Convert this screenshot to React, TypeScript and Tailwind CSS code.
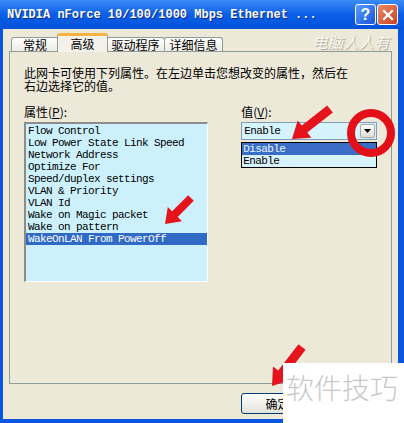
import React from "react";

const props = [
  "Flow Control",
  "Low Power State Link Speed",
  "Network Address",
  "Optimize For",
  "Speed/duplex settings",
  "VLAN & Priority",
  "VLAN Id",
  "Wake on Magic packet",
  "Wake on pattern",
  "WakeOnLAN From PowerOff",
];

const mono = "font-['Liberation_Mono','DejaVu_Sans_Mono',monospace]";
const cjk = "font-['Noto_Sans_CJK_SC','Noto_Sans',sans-serif]";

// arrow polygon from tail (x1,y1) to tip (x2,y2)
function arrowPts(x1: number, y1: number, x2: number, y2: number, shaft = 4, head = 11, headLen = 16) {
  const dx = x2 - x1;
  const dy = y2 - y1;
  const len = Math.hypot(dx, dy);
  const ux = dx / len;
  const uy = dy / len;
  const nx = -uy;
  const ny = ux;
  const bx = x2 - ux * headLen;
  const by = y2 - uy * headLen;
  const p = [
    [x1 + nx * shaft, y1 + ny * shaft],
    [bx + nx * shaft, by + ny * shaft],
    [bx + nx * head, by + ny * head],
    [x2, y2],
    [bx - nx * head, by - ny * head],
    [bx - nx * shaft, by - ny * shaft],
    [x1 - nx * shaft, y1 - ny * shaft],
  ];
  return p.map((q) => q[0].toFixed(1) + "," + q[1].toFixed(1)).join(" ");
}

function Tab({ label, active, className }: { label: string; active?: boolean; className: string }) {
  return (
    <div
      className={
        active
          ? `relative z-10 -mb-px h-[19px] rounded-t-[3px] border border-b-0 border-[#919b9c] border-t-[3px] border-t-[#f5b440] bg-[#f3f1ea] pt-px text-center text-[12px] leading-[13px] text-black ${className}`
          : `h-[14px] rounded-t-[3px] border border-b-0 border-[#919b9c] bg-gradient-to-b from-white to-[#ecebe4] text-center text-[12px] leading-[13px] text-black ${className}`
      }
    >
      {label}
    </div>
  );
}

export default function App() {
  return (
    <div className={`relative flex h-[423px] w-[404px] flex-col overflow-hidden bg-[#0a55dd] ${cjk}`}>
      {/* title bar */}
      <div className="flex h-[29px] shrink-0 items-center bg-gradient-to-b from-[#3a8cf6] via-[#0a5ee8] to-[#0453d9] pl-[7px] pr-[6px]">
        <span className={`${mono} flex-1 text-[12px] font-bold text-white [text-shadow:1px_1px_0_#0b2a86]`}>
          NVIDIA nForce 10/100/1000 Mbps Ethernet ...
        </span>
        <div className="flex gap-px">
          <div className="flex h-[21px] w-[21px] items-center justify-center rounded-[3px] border border-white bg-gradient-to-br from-[#5a9cff] to-[#1552d8] font-['Liberation_Sans',sans-serif] text-[16px] font-bold text-white">
            ?
          </div>
          <div className="flex h-[21px] w-[21px] items-center justify-center rounded-[3px] border border-white bg-gradient-to-br from-[#ec8a6a] to-[#c9401c]">
            <svg width="12" height="12" viewBox="0 0 12 12">
              <path d="M2 2 L10 10 M10 2 L2 10" stroke="white" strokeWidth="2.2" strokeLinecap="square" />
            </svg>
          </div>
        </div>
      </div>

      {/* body */}
      <div className="relative ml-[3px] mr-[6px] mb-[4px] flex flex-1 flex-col bg-[#ece9d8]">
        <span className="absolute right-[8px] top-[2px] text-[15px] italic tracking-[0.5px] text-[#f7f6f0] [text-shadow:1px_1px_1px_#a8a597]">
          电脑人人有
        </span>

        {/* tabs */}
        <div className="flex h-[22px] items-end pl-[8px] pt-[5px]">
          <Tab label="常规" className="w-[48px]" />
          <Tab label="高级" active className="-mx-[2px] w-[51px]" />
          <Tab label="驱动程序" className="w-[59px]" />
          <Tab label="详细信息" className="-ml-px w-[59px]" />
        </div>

        {/* panel */}
        <div className="mx-[6px] flex h-[333px] flex-col border border-[#919b9c] bg-[#ece9d8] px-[14px] pt-[14px]">
          <div className="h-[13px] text-[12px] leading-[13px] text-black">此网卡可使用下列属性。在左边单击您想改变的属性，然后在</div>
          <div className="h-[13px] text-[12px] leading-[13px] text-black">右边选择它的值。</div>

          <div className="mt-[13px] flex gap-[33px]">
            <div className="flex w-[186px] flex-col">
              <div className="text-[12px] leading-[14px] text-black">
                属性(<u>P</u>):
              </div>
              <div className="mt-[3px] h-[160px] border-l-2 border-t-2 border-b border-r border-l-[#8c8c8c] border-t-[#8c8c8c] border-b-white border-r-white bg-[#cdf1fc] pt-px">
                {props.map((p, i) => (
                  <div
                    key={p}
                    className={`${mono} h-[12px] whitespace-pre pl-[2px] text-[11px] leading-[12px] tracking-[-0.6px] ${
                      i === props.length - 1 ? "bg-[#316ac5] text-white" : "text-black"
                    }`}
                  >
                    {p}
                  </div>
                ))}
              </div>
            </div>

            <div className="flex w-[137px] flex-col">
              <div className="text-[12px] leading-[14px] text-black">
                值(<u>V</u>):
              </div>
              <div className="mt-[3px] flex h-[18px] items-center border border-[#7f9db9] bg-[#d6f3fc] pl-[2px] pr-px">
                <span className={`${mono} flex-1 text-[11px] leading-[12px] tracking-[-0.6px] text-black`}>Enable</span>
                <div className="flex h-[14px] w-[15px] items-center justify-center rounded-[2px] border border-[#a7a9a8] bg-gradient-to-b from-white to-[#dcdcd6]">
                  <svg width="7" height="4" viewBox="0 0 7 4">
                    <path d="M0 0 H7 L3.5 4 Z" fill="black" />
                  </svg>
                </div>
              </div>
              <div className="mt-[2px] border border-black bg-[#d6f3fc]">
                <div className={`${mono} h-[12px] bg-[#3a6dc8] pl-px text-[11px] leading-[12px] tracking-[-0.6px] text-[#e8f6ff]`}>
                  Disable
                </div>
                <div className={`${mono} h-[12px] pl-px text-[11px] leading-[12px] tracking-[-0.6px] text-black`}>Enable</div>
              </div>
            </div>
          </div>
        </div>

        {/* buttons */}
        <div className="mt-[9px] flex pl-[238px]">
          <div className="flex h-[21px] w-[73px] items-center justify-center rounded-[3px] border border-[#003c74] bg-gradient-to-b from-white to-[#e3e2da] text-[12px] text-black">
            确定
          </div>
        </div>
      </div>

      {/* red marks */}
      <svg className="pointer-events-none absolute inset-0" width="404" height="423" viewBox="0 0 404 423">
        <circle cx="371" cy="133" r="20" fill="none" stroke="#e3101a" strokeWidth="8" />
        <polygon points={arrowPts(330, 109, 292, 139, 4.5)} fill="#e5141c" />
        <polygon points={arrowPts(191, 198, 165, 224, 4, 10, 14)} fill="#e5141c" />
        <polygon points={arrowPts(302, 347, 272, 386, 4.5)} fill="#e5141c" />
      </svg>

      {/* watermark box */}
      <div className="absolute left-[283px] top-[363px] flex h-[60px] w-[121px] items-start bg-white pl-[3px] pt-[8px]">
        <span className="text-[28px] leading-[32px] font-light text-[#c8c8c8]">软件技巧</span>
      </div>
    </div>
  );
}
